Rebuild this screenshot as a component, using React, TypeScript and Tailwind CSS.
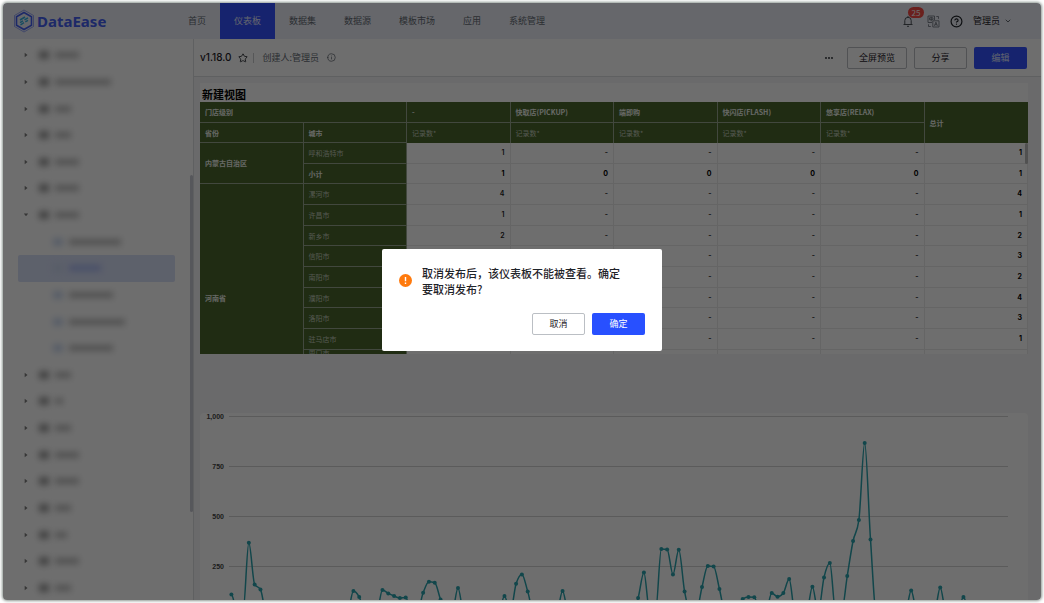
import { useState } from 'react';
import { ChevronDown, CircleAlert, CircleHelp, Star } from 'lucide-react';

const NAV = ['首页', '仪表板', '数据集', '数据源', '模板市场', '应用', '系统管理'];

// tree labels are masked, only their rough length is kept
const TREE = [
  { kind: 'closed', w: 'w-6' },
  { kind: 'closed', w: 'w-14' },
  { kind: 'closed', w: 'w-4' },
  { kind: 'closed', w: 'w-4' },
  { kind: 'closed', w: 'w-6' },
  { kind: 'closed', w: 'w-6' },
  { kind: 'open', w: 'w-6' },
  { kind: 'leaf', w: 'w-13' },
  { kind: 'active', w: 'w-8' },
  { kind: 'leaf', w: 'w-11' },
  { kind: 'leaf', w: 'w-14' },
  { kind: 'leaf', w: 'w-11' },
  { kind: 'closed', w: 'w-4' },
  { kind: 'closed', w: 'w-2' },
  { kind: 'closed', w: 'w-4' },
  { kind: 'closed', w: 'w-6' },
  { kind: 'closed', w: 'w-6' },
  { kind: 'closed', w: 'w-4' },
  { kind: 'closed', w: 'w-3' },
  { kind: 'closed', w: 'w-6' },
  { kind: 'closed', w: 'w-4' },
];

const STORES = ['-', '快取店(PICKUP)', '端即购', '快闪店(FLASH)', '悠享店(RELAX)'];

const ROWS = [
  { province: '内蒙古自治区', span: 2, city: '呼和浩特市', values: ['1', '-', '-', '-', '-', '1'] },
  { city: '小计', sum: true, values: ['1', '0', '0', '0', '0', '1'] },
  { province: '河南省', span: 9, city: '漯河市', values: ['4', '-', '-', '-', '-', '4'] },
  { city: '许昌市', values: ['1', '-', '-', '-', '-', '1'] },
  { city: '新乡市', values: ['2', '-', '-', '-', '-', '2'] },
  { city: '信阳市', values: ['3', '-', '-', '-', '-', '3'] },
  { city: '南阳市', values: ['2', '-', '-', '-', '-', '2'] },
  { city: '濮阳市', values: ['4', '-', '-', '-', '-', '4'] },
  { city: '洛阳市', values: ['3', '-', '-', '-', '-', '3'] },
  { city: '驻马店市', values: ['1', '-', '-', '-', '-', '1'] },
  { city: '周口市', values: ['', '', '', '', '', ''] },
];

const TICKS = [
  { label: '1,000', y: 3 },
  { label: '750', y: 53 },
  { label: '500', y: 103 },
  { label: '250', y: 153 },
];

const SERIES: Record<number, number> = {
  0: 108, 3: 366, 4: 158, 5: 133, 21: 125, 22: 95, 26: 130, 27: 113, 28: 100, 29: 90, 30: 93,
  33: 116, 34: 171, 35: 166, 36: 83, 39: 140, 47: 100, 49: 161, 50: 208, 51: 123, 57: 125,
  70: 90, 71: 218, 74: 335, 75: 333, 76: 208, 77: 331, 78: 123, 81: 145, 82: 250, 83: 248, 84: 135,
  88: 85, 89: 95, 90: 94, 93: 115, 94: 96, 95: 115, 96: 185, 100: 146, 102: 193, 103: 265,
  106: 200, 107: 375, 108: 480, 109: 865, 110: 383, 117: 128, 122: 143, 126: 95,
};

const POINTS = Array.from({ length: 132 }, (_, i) => ({
  x: 31.4 + i * 5.81,
  y: 203 - (SERIES[i] ?? 20) / 5,
}));

// monotone cubic through the points
function smoothPath(points: { x: number; y: number }[]) {
  const slope = points.slice(1).map((p, i) => (p.y - points[i].y) / (p.x - points[i].x));
  const tangent = points.map((_, i) => {
    const a = slope[i - 1] ?? 0;
    const b = slope[i] ?? 0;
    return (Math.sign(a) + Math.sign(b)) * Math.min(Math.abs(a), Math.abs(b), Math.abs(a + b) / 4);
  });
  return points.reduce((d, p, i) => {
    if (i === 0) return `M${p.x},${p.y}`;
    const prev = points[i - 1];
    const h = (p.x - prev.x) / 3;
    return `${d}C${prev.x + h},${prev.y + h * tangent[i - 1]} ${p.x - h},${p.y - h * tangent[i]} ${p.x},${p.y}`;
  }, '');
}

function Logo() {
  return (
    <a href="#" className="flex w-[171px] shrink-0 items-center gap-0.5 pl-2.5 text-[#4560f0]">
      <svg viewBox="0 0 22 24" className="h-6 w-[22px]" fill="none">
        <path d="M11 1 20.5 6.5v11L11 23 1.5 17.5v-11Z" stroke="currentColor" strokeWidth="1" opacity=".5" />
        <path d="M11 3.500 18.500 7.700v8.600L11 20.500 3.500 16.300V7.700Z" stroke="currentColor" strokeWidth="1.6" />
        <path
          d="m7 11 5-3M7 13.600l3-1.800m1.500-.9 3.500-2.100M7.500 15.800l3.500-2.100m1.300-.8 2.700-1.600"
          stroke="#35b0e0"
          strokeWidth="1.500"
        />
      </svg>
      <span className="font-['Noto_Sans'] text-[15px] leading-5 font-bold">DataEase</span>
    </a>
  );
}

function Header() {
  return (
    <header className="flex h-9 shrink-0 items-stretch bg-[#eceff8]">
      <Logo />
      <nav className="flex flex-1">
        {NAV.map((item) => (
          <a
            key={item}
            href="#"
            className={`flex items-center px-3.5 text-[9px] ${
              item === '仪表板' ? 'bg-[#3453ff] text-[#e4e8ff]' : 'text-[#646a73]'
            }`}
          >
            {item}
          </a>
        ))}
      </nav>
      <div className="flex items-center pr-[29px] text-[#1f2329]">
        <button type="button" aria-label="消息" className="relative text-[#50555c]">
          <svg viewBox="0 0 10 12" className="h-3 w-2.5" fill="none" stroke="currentColor">
            <path d="M1.800 9.500V5.500a3.200 3.200 0 0 1 6.400 0v4M.5 9.500h9M4 11.300h2M5 1v1.200" />
          </svg>
          <span className="absolute -top-2 left-[5px] flex h-[11px] w-4 items-center justify-center rounded-full bg-[#f54a45] text-[8px] text-white">
            25
          </span>
        </button>
        <button type="button" aria-label="语言" className="ml-3.5 text-[#646a73]">
          <svg viewBox="0 0 13 13" className="size-[13px]" fill="none" stroke="currentColor" strokeWidth=".8">
            <path d="M5 7.500H1V1h6.500v4M2.500 2.800H6v1.900H2.500ZM4.200 1.800v4.500" />
            <path d="M5.800 5.800H12V12H5.800ZM7.400 10.800 8.900 7.200l1.500 3.600M8 9.700h1.800M9.300 1.500h2.200v2.300M1.500 9.300v2.200h2.300" />
          </svg>
        </button>
        <button type="button" aria-label="帮助" className="ml-2.5">
          <CircleHelp className="size-[13px]" strokeWidth={2.2} />
        </button>
        <button type="button" className="ml-2.5 flex items-center gap-1 text-[9px]">
          管理员
          <ChevronDown className="size-2" />
        </button>
      </div>
    </header>
  );
}

function Sidebar() {
  return (
    <aside className="relative w-[191px] shrink-0 border-r border-[#dcdee2] pt-[3px]">
      <ul className="flex h-[559px] flex-col">
        {TREE.map((node, i) => {
          const child = node.kind === 'leaf' || node.kind === 'active';
          return (
            <li
              key={i}
              className={`mr-[18px] ml-[15px] flex flex-1 items-center rounded-xs ${child ? 'pl-[35px]' : 'pl-[5px]'} ${
                node.kind === 'active' ? 'bg-[#d8e0f8]' : ''
              }`}
            >
              {!child && (
                <svg viewBox="0 0 6 6" className="mr-2.5 size-[6px]" fill="#7d7d7d">
                  <path d={node.kind === 'open' ? 'M.8 1.500h4.400L3 4.300Z' : 'M1.700.8v4.400L4.500 3Z'} />
                </svg>
              )}
              <span className={`h-2 w-2.5 blur-[3px] ${child ? 'bg-[#cbd8f0]' : 'bg-[#9b9b9b]'}`} />
              <span
                className={`ml-1.5 h-1.5 blur-[3px] ${node.w} ${node.kind === 'active' ? 'bg-[#a9b8f3]' : 'bg-[#bcbcbc]'}`}
              />
            </li>
          );
        })}
      </ul>
      <div className="absolute top-[136px] right-0 h-[337px] w-[3px] rounded-full bg-[#c8c9d4]" />
    </aside>
  );
}

function Toolbar() {
  return (
    <div className="flex h-[38px] shrink-0 items-center border-b border-[#dcdee2] pr-3.5 pl-1.5 text-[9px] text-[#1f2329]">
      <h1 className="font-[Inter] text-[10px] font-medium">v1.18.0</h1>
      <button type="button" aria-label="收藏" className="ml-1.5">
        <Star className="size-2.5" />
      </button>
      <span className="mx-[5px] h-2.5 w-px bg-[#c8cacd]" />
      <span className="ml-1 text-[#646a73]">创建人:管理员</span>
      <CircleAlert className="ml-2 size-[9px] rotate-180 text-[#646a73]" />
      <button type="button" aria-label="更多" className="mr-3.5 ml-auto">
        <svg viewBox="0 0 8 2" className="h-0.5 w-2" fill="currentColor">
          <circle cx="1" cy="1" r=".9" />
          <circle cx="4" cy="1" r=".9" />
          <circle cx="7" cy="1" r=".9" />
        </svg>
      </button>
      <div className="flex gap-[7px]">
        <button type="button" className="h-[22px] w-[60px] rounded-xs border border-[#bbbfc4]">全屏预览</button>
        <button type="button" className="h-[22px] w-[53px] rounded-xs border border-[#bbbfc4]">分享</button>
        <button type="button" className="h-[22px] w-[53px] rounded-xs bg-[#3453ff] text-[#dfe4ff]">编辑</button>
      </div>
    </div>
  );
}

function PivotTable() {
  const head = 'border-r border-b border-[#9aa890] bg-[#4a662e] px-[5px] text-left';
  return (
    <section className="bg-white pt-1">
      <h2 className="px-0.5 text-[11px] leading-[15px] font-bold text-black">新建视图</h2>
      <div className="relative h-[252px] overflow-hidden">
        <table className="w-full table-fixed border-separate border-spacing-0 text-[7px] leading-[10px]">
          <thead className="text-[#eef2ea]">
            <tr className="h-[21px]">
              <th colSpan={2} className={head}>门店级别</th>
              {STORES.map((store) => (
                <th key={store} className={head}>{store}</th>
              ))}
              <th rowSpan={2} className="bg-[#4a662e] px-[5px] text-left">总计</th>
            </tr>
            <tr className="h-5">
              <th className={head}>省份</th>
              <th className={head}>城市</th>
              {STORES.map((store) => (
                <th key={store} className="border-r border-[#9aa890] bg-[#4a662e] px-[5px] text-left font-normal text-[#c3ccbb]">
                  记录数*
                </th>
              ))}
            </tr>
          </thead>
          <tbody>
            {ROWS.map((row, r) => {
              // the last row runs on below the scroll area
              const last = r === ROWS.length - 1;
              return (
                <tr key={row.city} className={last ? 'h-[62px]' : 'h-[21px] nth-[3n+2]:h-5'}>
                  {row.province && (
                    <th rowSpan={row.span} className={`${head} text-[#eef2ea]`}>{row.province}</th>
                  )}
                  <th
                    className={`${head} ${row.sum ? 'text-[#eef2ea]' : 'font-normal text-[#c3ccbb]'} ${
                      last ? 'align-top leading-[7px]' : ''
                    }`}
                  >
                    {row.city}
                  </th>
                  {row.values.map((value, i) => (
                    <td
                      key={i}
                      className={`border-r border-b border-[#ebebeb] px-[5px] text-right font-[Inter] ${
                        row.sum || i === 5 ? 'font-bold text-black' : 'font-semibold text-[#222]'
                      }`}
                    >
                      {value}
                    </td>
                  ))}
                </tr>
              );
            })}
          </tbody>
        </table>
        <div className="absolute top-[41px] right-0 h-[21px] w-[3px] rounded-full bg-[#bdbdbd]" />
      </div>
    </section>
  );
}

function LineChart() {
  return (
    <section className="mt-[59px] rounded-t bg-white">
      <svg viewBox="0 0 828 200" className="w-full" role="img" aria-label="记录数">
        {TICKS.map((tick) => (
          <g key={tick.label}>
            <text
              x="24"
              y={tick.y + 3}
              textAnchor="end"
              className="fill-[#444] font-['Liberation_Sans'] text-[7px] font-bold"
            >
              {tick.label}
            </text>
            <path d={`M29 ${tick.y + 0.5}H808`} stroke="#d2d2d2" />
          </g>
        ))}
        <path d={smoothPath(POINTS)} fill="none" stroke="#2aa3ad" strokeWidth="1.5" />
        {POINTS.map((p) => (
          <circle key={p.x} cx={p.x} cy={p.y} r="2" fill="#2aa3ad" />
        ))}
      </svg>
    </section>
  );
}

function ConfirmDialog({ onClose }: { onClose: () => void }) {
  return (
    <div className="absolute inset-0 flex items-center justify-center bg-black/57 pb-1">
      <div role="alertdialog" aria-describedby="confirm-text" className="w-[280px] rounded-xs bg-white px-[17px] py-4">
        <div className="flex items-center gap-2.5">
          <svg viewBox="0 0 13 13" className="size-[13px] shrink-0">
            <circle cx="6.5" cy="6.5" r="6.5" fill="#ff7a0d" />
            <path d="M6.500 3v4.200M6.500 8.600v1.400" stroke="#fff" strokeWidth="1.400" />
          </svg>
          <p id="confirm-text" className="w-[200px] text-[11px] leading-4 font-medium text-[#1f2329]">
            取消发布后，该仪表板不能被查看。确定要取消发布?
          </p>
        </div>
        <div className="mt-4 flex justify-end gap-[7px] text-[9px]">
          <button type="button" onClick={onClose} className="h-[22px] w-[53px] rounded-xs border border-[#bbbfc4] text-[#1f2329]">
            取消
          </button>
          <button type="button" onClick={onClose} className="h-[22px] w-[53px] rounded-xs bg-[#2850ff] text-white">
            确定
          </button>
        </div>
      </div>
    </div>
  );
}

export default function App() {
  const [confirming, setConfirming] = useState(true);

  return (
    <div className="h-screen bg-white p-[3px] font-['Noto_Sans_CJK_SC',sans-serif]">
      <div className="relative flex h-full flex-col overflow-hidden rounded-[4px] bg-white shadow-[0_0_3px_1px_#8b9690]">
        <Header />
        <div className="flex min-h-0 flex-1">
          <Sidebar />
          <main className="flex min-w-0 flex-1 flex-col">
            <Toolbar />
            <div className="min-h-0 flex-1 overflow-hidden bg-[#f5f6f7] pt-1.5 pr-[13px] pl-1.5">
              <PivotTable />
              <LineChart />
            </div>
          </main>
        </div>
        {confirming && <ConfirmDialog onClose={() => setConfirming(false)} />}
      </div>
    </div>
  );
}
